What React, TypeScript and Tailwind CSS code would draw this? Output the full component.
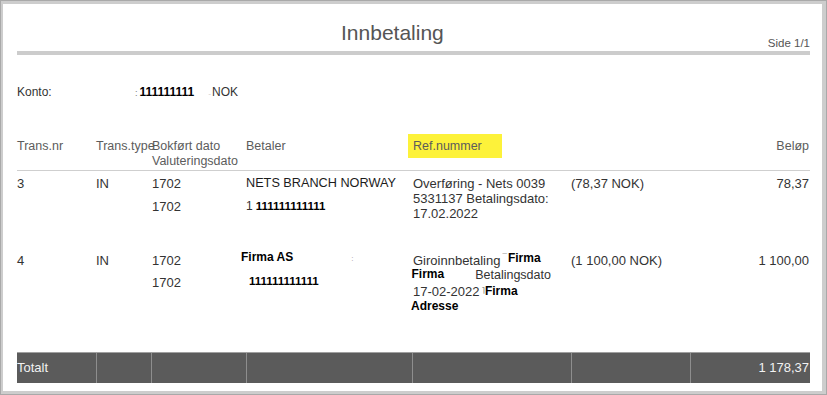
import React from "react";

const cols = "grid grid-cols-[79px_55px_95px_166px_159px_119px_119px]";

function HeaderRow() {
  return (
    <div className={`${cols} h-[37px] border-b border-[#cfcfcf] text-[12.5px] leading-[15px] text-[#5c5c5c]`}>
      <div className="pt-[5px]">Trans.nr</div>
      <div className="pt-[5px] whitespace-nowrap">Trans.type</div>
      <div className="pt-[5px] pl-px whitespace-nowrap">
        <div>Bokført dato</div>
        <div>Valuteringsdato</div>
      </div>
      <div className="pt-[5px]">Betaler</div>
      <div>
        <span className="-ml-[4px] inline-block h-[24px] w-[94px] bg-[#fdf23a] pl-[5px] leading-[24px]">
          Ref.nummer
        </span>
      </div>
      <div />
      <div className="pt-[5px] text-right">Beløp</div>
    </div>
  );
}

function FirstRow() {
  return (
    <div className={`${cols} h-[77px] pt-[5px] text-[13px] leading-[15px] text-[#333]`}>
      <div>3</div>
      <div>IN</div>
      <div className="pl-px">
        <div>1702</div>
        <div className="mt-[8px]">1702</div>
      </div>
      <div className="whitespace-nowrap">
        <div className="text-[12.7px] text-[#1c1c1c]">NETS BRANCH NORWAY</div>
        <div className="mt-[8px] flex items-baseline">
          <span className="text-[12px]">1</span>
          <span className="ml-[3px] text-[11.5px] font-bold text-black">111111111111</span>
        </div>
      </div>
      <div className="pl-px">
        <div>Overføring - Nets 0039</div>
        <div>5331137 Betalingsdato:</div>
        <div>17.02.2022</div>
      </div>
      <div className="whitespace-nowrap">(78,37 NOK)</div>
      <div className="text-right">78,37</div>
    </div>
  );
}

function SecondRow() {
  return (
    <div className={`${cols} h-[104px] pt-[5px] text-[13px] leading-[15px] text-[#333]`}>
      <div>4</div>
      <div>IN</div>
      <div className="pl-px">
        <div>1702</div>
        <div className="mt-[6.5px]">1702</div>
      </div>
      <div className="whitespace-nowrap">
        <div className="-mt-[3px] flex items-baseline">
          <span className="-ml-[5px] text-[12px] font-bold text-black">Firma AS</span>
          <span className="ml-[58px] text-[8px] text-[#999]">:</span>
        </div>
        <div className="mt-[8px] pl-[3px] text-[11.5px] font-bold text-black">111111111111</div>
      </div>
      <div className="pl-px whitespace-nowrap">
        <div className="flex h-[15px] items-start">
          <span>Giroinnbetaling</span>
          <span className="ml-[2px] text-[8px] leading-[8px] text-[#555]">¯</span>
          <span className="-mt-[2px] ml-px text-[12px] leading-[14px] font-bold text-black">Firma</span>
        </div>
        <div className="-ml-[1.5px] flex h-[13px] items-start leading-[13px]">
          <span className="text-[12px] font-bold text-black">Firma</span>
          <span className="ml-[31px] mt-[1px] text-[12.5px]">Betalingsdato</span>
        </div>
        <div className="mt-[3px] flex items-center">
          <span>17-02-2022</span>
          <span className="ml-[2px] text-[9px] text-[#555]">˥</span>
          <span className="text-[12px] font-bold text-black">Firma</span>
        </div>
        <div className="-ml-[2px] text-[12px] font-bold text-black">Adresse</div>
      </div>
      <div className="whitespace-nowrap">(1 100,00 NOK)</div>
      <div className="text-right">1 100,00</div>
    </div>
  );
}

function TotalRow() {
  const cell = "border-l border-[#8e8e8e]";
  return (
    <div className={`${cols} h-[31px] border-t border-[#a0a0a0] bg-[#5b5b5b] text-[13px] leading-[29px] text-[#f2f2f2]`}>
      <div>Totalt</div>
      <div className={cell} />
      <div className={cell} />
      <div className={cell} />
      <div className={cell} />
      <div className={cell} />
      <div className={`${cell} text-right`}>1 178,37</div>
    </div>
  );
}

export default function App() {
  return (
    <div className="h-[395px] w-[827px] border border-[#a9a9a9] bg-[#cdcdcd] font-['Liberation_Sans',Arial,sans-serif]">
      <div className="ml-[2px] mr-[4px] mt-[3px] h-[387px] bg-white pl-[14px] pr-[12px]">
        {/* page header */}
        <div className="flex h-[47px]">
          <div className="flex-1 pt-[17px] text-center text-[21px] leading-[24px] text-[#555]">
            Innbetaling
          </div>
          <div className="self-end pb-[1px] text-[11.5px] leading-[14px] text-[#555]">Side 1/1</div>
        </div>
        <div className="h-[4px] bg-[#cccccc]" />

        {/* account line */}
        <div className="mt-[29px] flex items-baseline text-[12px] leading-[16px] text-[#333]">
          <span className="w-[118px]">Konto:</span>
          <span className="text-[9px] text-[#777]">:</span>
          <span className="ml-[2px] text-[12px] font-bold text-black">111111111</span>
          <span className="ml-[14px] text-[8px] text-[#ccc]">-</span>
          <span className="ml-[1px]">NOK</span>
        </div>

        <div className="mt-[32px]">
          <HeaderRow />
          <FirstRow />
          <SecondRow />
          <TotalRow />
        </div>
      </div>
    </div>
  );
}
